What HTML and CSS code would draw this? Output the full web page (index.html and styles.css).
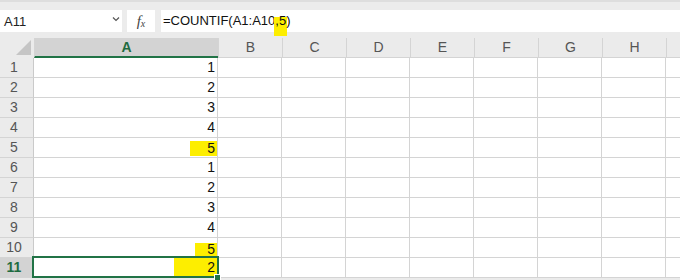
FILE: index.html
```html
<!DOCTYPE html>
<html>
<head>
<meta charset="utf-8">
<link rel="stylesheet" href="styles.css">
</head>
<body>
<div class="app">
  <div class="toolbar">
    <div class="namebox"><span class="name">A11</span><span class="chev"><svg width="8" height="6" viewBox="0 0 8 6"><path d="M1 1.5 L4 4.5 L7 1.5" fill="none" stroke="#555" stroke-width="1.2"/></svg></span></div>
    <div class="fxbox"><span class="fx">f<sub>x</sub></span></div>
    <div class="formula">=COUNTIF(A1:A10<span class="hl-f">,5</span>)</div>
  </div>
  <div class="sheet">
    <div class="corner"><svg width="33" height="19" viewBox="0 0 33 19"><polygon points="31,2 31,17 16,17" fill="#c5c5c5"/></svg></div>
    <div class="ch sel">A</div>
    <div class="ch">B</div>
    <div class="ch">C</div>
    <div class="ch">D</div>
    <div class="ch">E</div>
    <div class="ch">F</div>
    <div class="ch">G</div>
    <div class="ch">H</div>
    <div class="ch last"></div>

    <div class="rh">1</div><div class="c num">1</div><div class="c"></div><div class="c"></div><div class="c"></div><div class="c"></div><div class="c"></div><div class="c"></div><div class="c"></div><div class="c last"></div>
    <div class="rh">2</div><div class="c num">2</div><div class="c"></div><div class="c"></div><div class="c"></div><div class="c"></div><div class="c"></div><div class="c"></div><div class="c"></div><div class="c last"></div>
    <div class="rh">3</div><div class="c num">3</div><div class="c"></div><div class="c"></div><div class="c"></div><div class="c"></div><div class="c"></div><div class="c"></div><div class="c"></div><div class="c last"></div>
    <div class="rh">4</div><div class="c num">4</div><div class="c"></div><div class="c"></div><div class="c"></div><div class="c"></div><div class="c"></div><div class="c"></div><div class="c"></div><div class="c last"></div>
    <div class="rh">5</div><div class="c num"><span class="hl hl5">5</span></div><div class="c"></div><div class="c"></div><div class="c"></div><div class="c"></div><div class="c"></div><div class="c"></div><div class="c"></div><div class="c last"></div>
    <div class="rh">6</div><div class="c num">1</div><div class="c"></div><div class="c"></div><div class="c"></div><div class="c"></div><div class="c"></div><div class="c"></div><div class="c"></div><div class="c last"></div>
    <div class="rh">7</div><div class="c num">2</div><div class="c"></div><div class="c"></div><div class="c"></div><div class="c"></div><div class="c"></div><div class="c"></div><div class="c"></div><div class="c last"></div>
    <div class="rh">8</div><div class="c num">3</div><div class="c"></div><div class="c"></div><div class="c"></div><div class="c"></div><div class="c"></div><div class="c"></div><div class="c"></div><div class="c last"></div>
    <div class="rh">9</div><div class="c num">4</div><div class="c"></div><div class="c"></div><div class="c"></div><div class="c"></div><div class="c"></div><div class="c"></div><div class="c"></div><div class="c last"></div>
    <div class="rh">10</div><div class="c num"><span class="hl hl10">5</span></div><div class="c"></div><div class="c"></div><div class="c"></div><div class="c"></div><div class="c"></div><div class="c"></div><div class="c"></div><div class="c last"></div>
    <div class="rh rsel">11</div><div class="c num active"><span class="hl hl11">2</span><span class="handle"></span></div><div class="c"></div><div class="c"></div><div class="c"></div><div class="c"></div><div class="c"></div><div class="c"></div><div class="c"></div><div class="c last"></div>
  </div>
</div>
</body>
</html>
```
FILE: styles.css
```css
html, body {
  margin: 0;
  padding: 0;
  background: #ffffff;
  overflow: hidden;
}
.app {
  width: 680px;
  height: 280px;
  overflow: hidden;
  font-family: "Liberation Sans", Arial, sans-serif;
  background: #ebebeb;
}
.toolbar {
  display: flex;
  height: 30px;
  box-sizing: border-box;
  padding-top: 8px;
  border-top: 2px solid #dedede;
  background: #ececec;
  position: relative;
  z-index: 2;
}
.namebox {
  width: 122px;
  height: 22px;
  background: #fff;
  display: flex;
  align-items: center;
  justify-content: space-between;
  box-sizing: border-box;
  padding: 0 2px 0 4px;
}
.name {
  font-size: 13px;
  color: #222;
}
.chev {
  display: flex;
  align-items: center;
  margin-top: -4px;
}
.fxbox {
  width: 28px;
  height: 22px;
  margin-left: 5px;
  background: #fff;
  display: flex;
  align-items: center;
  justify-content: center;
}
.fx {
  font-family: "Liberation Serif", "Times New Roman", serif;
  font-style: italic;
  font-size: 15px;
  color: #444;
  line-height: 1;
}
.fx sub {
  font-size: 10px;
  vertical-align: -1px;
}
.formula {
  flex: 1;
  height: 22px;
  margin-left: 6px;
  background: #fff;
  font-size: 13px;
  line-height: 22px;
  color: #111;
  padding-left: 2px;
  white-space: nowrap;
}
.hl-f {
  background: linear-gradient(to bottom, transparent 4px, #fdee00 4px);
  padding: 0 1px 8px 1px;
  margin: 0 -1px;
}
.sheet {
  display: grid;
  grid-template-columns: 34px 184px repeat(7, 64px) 1fr;
  grid-template-rows: 20px repeat(11, 20px);
  margin-top: 8px;
}
.corner {
  background: #ebebeb;
  display: flex;
  align-items: flex-start;
}
.ch {
  background: #ebebeb;
  border-left: 1px solid #d4d4d4;
  border-bottom: 1px solid #d4d4d4;
  font-size: 14px;
  color: #555;
  text-align: center;
  line-height: 19px;
}
.ch.sel {
  background: #d3d3d3;
  border-bottom: 2px solid #217346;
  color: #1e6b3f;
  font-weight: bold;
  line-height: 18px;
}
.rh {
  background: #ebebeb;
  border-right: 1px solid #cacaca;
  border-bottom: 1px solid #d4d4d4;
  font-size: 14px;
  color: #555;
  text-align: center;
  padding-right: 5px;
  line-height: 19px;
}
.rh.rsel {
  background: #d3d3d3;
  color: #1e6b3f;
  font-weight: bold;
}
.c {
  background: #fff;
  border-right: 1px solid #d4d4d4;
  border-bottom: 1px solid #d4d4d4;
  box-sizing: border-box;
}
.c.last {
  border-right: none;
}
.num {
  font-size: 14px;
  color: #111;
  text-align: right;
  padding-right: 2px;
  line-height: 19px;
  position: relative;
}
.hl {
  display: inline-block;
  background: #fdee00;
  margin-right: -2px;
  padding-right: 2px;
}
.hl5 {
  padding-left: 17px;
  line-height: 15px;
  vertical-align: -1px;
}
.hl10 {
  padding-left: 12px;
  line-height: 13px;
  vertical-align: -2px;
}
.hl11 {
  padding-left: 33px;
  line-height: 21px;
  margin-top: -1px;
  vertical-align: top;
}
.active::after {
  content: "";
  position: absolute;
  left: -2px;
  top: -2px;
  right: -2px;
  bottom: -1px;
  border: 2px solid #217346;
  pointer-events: none;
}
.handle {
  position: absolute;
  right: -4px;
  bottom: -4px;
  width: 5px;
  height: 5px;
  background: #217346;
  border: 1px solid #fff;
  z-index: 3;
}
```
